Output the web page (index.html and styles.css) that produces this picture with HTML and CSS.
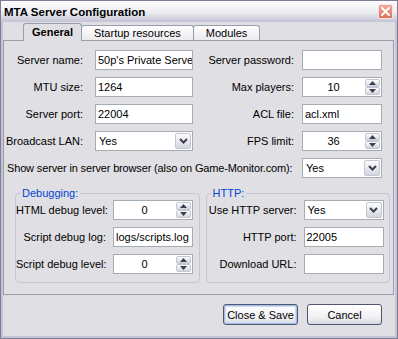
FILE: index.html
```html
<!DOCTYPE html>
<html lang="en">
<head>
    <meta charset="UTF-8">
    <title>MTA Server Configuration</title>
    <link rel="stylesheet" href="styles.css">
</head>
<body>
    <div class="window">
        <div class="titlebar">
            <span class="title">MTA Server Configuration</span>
            <span class="close">
                <svg width="9" height="9" viewBox="0 0 9 9"><path d="M1 1 L8 8 M8 1 L1 8" stroke="#fff" stroke-width="2" stroke-linecap="round"/></svg>
            </span>
        </div>

        <div class="client">
            <div class="tabs">
                <div class="tab active">General</div>
                <div class="tab">Startup resources</div>
                <div class="tab">Modules</div>
            </div>

            <div class="panel">
                <div class="form">
                    <label>Server name:</label>
                    <div class="edit">50p's Private Serve</div>
                    <label>Server password:</label>
                    <div class="edit"></div>

                    <label>MTU size:</label>
                    <div class="edit">1264</div>
                    <label>Max players:</label>
                    <div class="spin">
                        <span class="spin-value">10</span>
                        <div class="spin-btns">
                            <span class="spin-btn"><svg width="7" height="4" viewBox="0 0 7 4"><path d="M0 4 L3.5 0 L7 4 Z" fill="#3d3d52"/></svg></span>
                            <span class="spin-btn"><svg width="7" height="4" viewBox="0 0 7 4"><path d="M0 0 L3.5 4 L7 0 Z" fill="#3d3d52"/></svg></span>
                        </div>
                    </div>

                    <label>Server port:</label>
                    <div class="edit">22004</div>
                    <label>ACL file:</label>
                    <div class="edit">acl.xml</div>

                    <label>Broadcast LAN:</label>
                    <div class="combo">
                        <span class="combo-value">Yes</span>
                        <span class="drop"><svg width="9" height="6" viewBox="0 0 9 6"><path d="M1 1 L4.5 4.5 L8 1" fill="none" stroke="#3d3d52" stroke-width="2"/></svg></span>
                    </div>
                    <label>FPS limit:</label>
                    <div class="spin">
                        <span class="spin-value">36</span>
                        <div class="spin-btns">
                            <span class="spin-btn"><svg width="7" height="4" viewBox="0 0 7 4"><path d="M0 4 L3.5 0 L7 4 Z" fill="#3d3d52"/></svg></span>
                            <span class="spin-btn"><svg width="7" height="4" viewBox="0 0 7 4"><path d="M0 0 L3.5 4 L7 0 Z" fill="#3d3d52"/></svg></span>
                        </div>
                    </div>

                    <label class="wide">Show server in server browser (also on Game-Monitor.com):</label>
                    <div class="combo">
                        <span class="combo-value">Yes</span>
                        <span class="drop"><svg width="9" height="6" viewBox="0 0 9 6"><path d="M1 1 L4.5 4.5 L8 1" fill="none" stroke="#3d3d52" stroke-width="2"/></svg></span>
                    </div>
                </div>

                <div class="groups">
                    <fieldset class="group">
                        <legend>Debugging:</legend>
                        <div class="group-form">
                            <label>HTML debug level:</label>
                            <div class="spin">
                                <span class="spin-value">0</span>
                                <div class="spin-btns">
                                    <span class="spin-btn"><svg width="7" height="4" viewBox="0 0 7 4"><path d="M0 4 L3.5 0 L7 4 Z" fill="#3d3d52"/></svg></span>
                                    <span class="spin-btn"><svg width="7" height="4" viewBox="0 0 7 4"><path d="M0 0 L3.5 4 L7 0 Z" fill="#3d3d52"/></svg></span>
                                </div>
                            </div>
                            <label>Script debug log:</label>
                            <div class="edit">logs/scripts.log</div>
                            <label>Script debug level:</label>
                            <div class="spin">
                                <span class="spin-value">0</span>
                                <div class="spin-btns">
                                    <span class="spin-btn"><svg width="7" height="4" viewBox="0 0 7 4"><path d="M0 4 L3.5 0 L7 4 Z" fill="#3d3d52"/></svg></span>
                                    <span class="spin-btn"><svg width="7" height="4" viewBox="0 0 7 4"><path d="M0 0 L3.5 4 L7 0 Z" fill="#3d3d52"/></svg></span>
                                </div>
                            </div>
                        </div>
                    </fieldset>

                    <fieldset class="group">
                        <legend>HTTP:</legend>
                        <div class="group-form">
                            <label>Use HTTP server:</label>
                            <div class="combo">
                                <span class="combo-value">Yes</span>
                                <span class="drop"><svg width="9" height="6" viewBox="0 0 9 6"><path d="M1 1 L4.5 4.5 L8 1" fill="none" stroke="#3d3d52" stroke-width="2"/></svg></span>
                            </div>
                            <label>HTTP port:</label>
                            <div class="edit">22005</div>
                            <label>Download URL:</label>
                            <div class="edit"></div>
                        </div>
                    </fieldset>
                </div>
            </div>

            <div class="buttons">
                <button class="btn default">Close &amp; Save</button>
                <button class="btn">Cancel</button>
            </div>
        </div>
    </div>
</body>
</html>
```

FILE: styles.css
```css
/* XP silver style dialog */
body {
    margin: 0;
    font-family: 'Liberation Sans', Arial, sans-serif;
    font-size: 11px;
    color: #000;
    background: #fff;
}

.window {
    width: 398px;
    height: 339px;
    box-sizing: border-box;
    border: 1px solid #7c7c94;
    background: #c4c4d4;
    display: flex;
    flex-direction: column;
}

.titlebar {
    height: 21px;
    flex-shrink: 0;
    display: flex;
    align-items: center;
    justify-content: space-between;
    padding: 0 4px 0 3px;
    background: linear-gradient(#fdfdfe, #ececf2 55%, #c3c3d3);
}

.title {
    font-weight: bold;
    font-size: 11.5px;
}

.close {
    width: 15px;
    height: 15px;
    box-sizing: border-box;
    border: 1px solid #fbe3de;
    border-radius: 2px;
    background: linear-gradient(#f3a99a, #dc6f5f);
    display: flex;
    align-items: center;
    justify-content: center;
}

.client {
    flex: 1;
    margin: 0 2px 2px;
    padding: 1px 1px 0 0;
    background: #e0dfe3;
    display: flex;
    flex-direction: column;
}

/* Tabs */
.tabs {
    display: flex;
    align-items: flex-end;
    height: 17px;
    padding-left: 20px;
}

.tab {
    height: 15px;
    box-sizing: border-box;
    padding: 0 12px;
    border: 1px solid #9a9cab;
    border-bottom: none;
    border-radius: 3px 3px 0 0;
    background: linear-gradient(#ffffff, #ebebef);
    line-height: 14px;
}

.tab + .tab {
    margin-left: -1px;
}

.tab.active {
    height: 18px;
    margin-bottom: -1px;
    padding: 0 8px;
    font-weight: bold;
    line-height: 16px;
    background: #e0dfe3;
    position: relative;
    z-index: 1;
}

.panel {
    border: 1px solid #9a9cab;
    background: #e0dfe3;
    padding: 9px 0 11px 0;
}

/* Form rows */
.form {
    display: grid;
    grid-template-columns: 85px 98px 97px 80px;
    grid-auto-rows: 20px;
    column-gap: 6px;
    row-gap: 7px;
    align-items: center;
    margin-bottom: 9px;
}

.form label {
    text-align: right;
    padding-right: 2px;
    white-space: nowrap;
}

.form > label:nth-child(4n+1) {
    padding-right: 6px;
}

.form label.wide {
    grid-column: 1 / 4;
    text-align: left;
    padding-left: 3px;
    letter-spacing: -0.15px;
}

.edit, .combo, .spin {
    height: 20px;
    box-sizing: border-box;
    border: 1px solid #a5acb2;
    background: #fff;
    white-space: nowrap;
    overflow: hidden;
}

.edit {
    padding: 0 2px;
    line-height: 18px;
}

.combo, .spin {
    display: flex;
}

.combo-value {
    flex: 1;
    padding-left: 3px;
    line-height: 18px;
}

.drop {
    width: 16px;
    margin: 1px;
    box-sizing: border-box;
    border: 1px solid #c3c5d3;
    border-radius: 2px;
    background: linear-gradient(#fdfdfe, #d3d4df);
    display: flex;
    align-items: center;
    justify-content: center;
}

.spin-value {
    flex: 1;
    text-align: center;
    line-height: 18px;
}

.spin-btns {
    width: 15px;
    margin: 1px;
    display: flex;
    flex-direction: column;
}

.spin-btn {
    flex: 1;
    box-sizing: border-box;
    border: 1px solid #c3c5d3;
    border-radius: 2px;
    background: linear-gradient(#fdfdfe, #d3d4df);
    display: flex;
    align-items: center;
    justify-content: center;
}

/* Group boxes */
.groups {
    display: flex;
    gap: 6px;
    margin: 0 3px 0 11px;
}

.group {
    flex: 1;
    min-width: 0;
    margin: 0;
    padding: 1px 0 8px 0;
    border: 1px solid #c6c6d2;
    border-radius: 4px;
}

.group legend {
    margin-left: 4px;
    padding: 0 2px;
    line-height: 12px;
    color: #0046d5;
}

.group-form {
    display: grid;
    grid-template-columns: 91px 80px;
    grid-auto-rows: 20px;
    column-gap: 6px;
    row-gap: 7px;
    align-items: center;
}

.group-form label {
    text-align: right;
    padding-right: 1px;
    white-space: nowrap;
}

/* Buttons */
.buttons {
    display: flex;
    justify-content: flex-end;
    gap: 9px;
    padding: 9px 12px 0 0;
}

.btn {
    width: 75px;
    height: 21px;
    box-sizing: border-box;
    padding: 0;
    border: 1px solid #4f5670;
    border-radius: 3px;
    background: linear-gradient(#ffffff, #f1f1f4 65%, #d7d7e1);
    font-family: inherit;
    font-size: 11px;
    color: #000;
}

.btn.default {
    box-shadow: inset 0 0 0 1px #a4bde9, inset 0 0 0 2px #cddbf4;
}
```
